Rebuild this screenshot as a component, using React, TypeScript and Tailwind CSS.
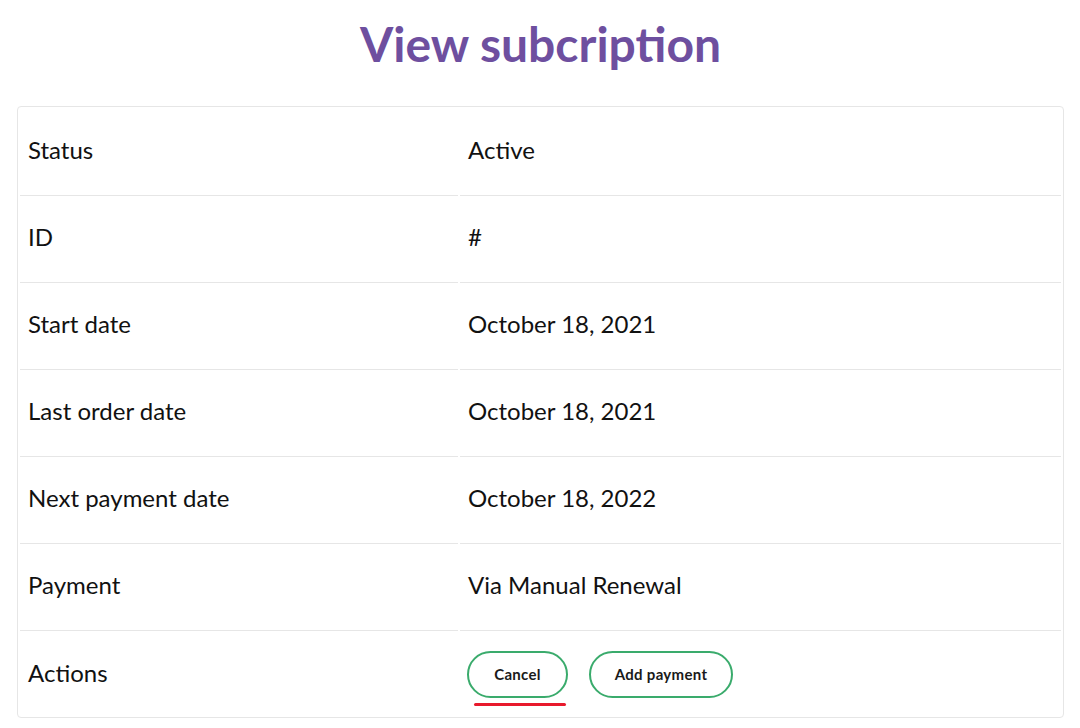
const rows: { label: string; value: string }[] = [
  { label: "Status", value: "Active" },
  { label: "ID", value: "#" },
  { label: "Start date", value: "October 18, 2021" },
  { label: "Last order date", value: "October 18, 2021" },
  { label: "Next payment date", value: "October 18, 2022" },
  { label: "Payment", value: "Via Manual Renewal" },
];

const App = () => {
  return (
    <div
      className="min-h-screen bg-white pl-[17px] pr-[16px] pb-[10px] text-[#111111]"
      style={{ fontFamily: "Lato, 'Open Sans', sans-serif" }}
    >
      <h1 className="h-[106px] pt-[14px] text-center text-[48px] font-bold leading-[60px] text-[#6e4f9f]">
        View subcription
      </h1>

      <div className="flex flex-col gap-[2px] rounded-[4px] border border-[#e6e6e6] px-[2px] pt-[4px] pb-[2px]">
        {rows.map((row) => (
          <div key={row.label} className="grid grid-cols-[438px_1fr] gap-[2px]">
            <div className="flex h-[85px] items-center border-b border-[#e6e6e6] px-[8px] pb-[6px] text-[24px]">
              {row.label}
            </div>
            <div className="flex h-[85px] items-center border-b border-[#e6e6e6] px-[8px] pb-[6px] text-[24px]">
              {row.value}
            </div>
          </div>
        ))}

        {/* Actions */}
        <div className="grid grid-cols-[438px_1fr] gap-[2px]">
          <div className="flex h-[82px] items-center px-[8px] pb-[2px] text-[24px]">Actions</div>
          <div className="flex h-[82px] items-center gap-[21px] px-[7px] pt-[1px]">
            <div className="relative">
              <button className="h-[47px] w-[101px] rounded-full border-2 border-[#3aab6c] text-[15px] font-bold tracking-[0.3px] text-[#1a1a1a]">
                Cancel
              </button>
              <span className="absolute left-[7px] top-[52px] h-[3px] w-[92px] rounded-full bg-[#e8192c]" />
            </div>
            <button className="h-[47px] w-[144px] rounded-full border-2 border-[#3aab6c] text-[15px] font-bold tracking-[0.3px] text-[#1a1a1a]">
              Add payment
            </button>
          </div>
        </div>
      </div>
    </div>
  );
};

export default App;
